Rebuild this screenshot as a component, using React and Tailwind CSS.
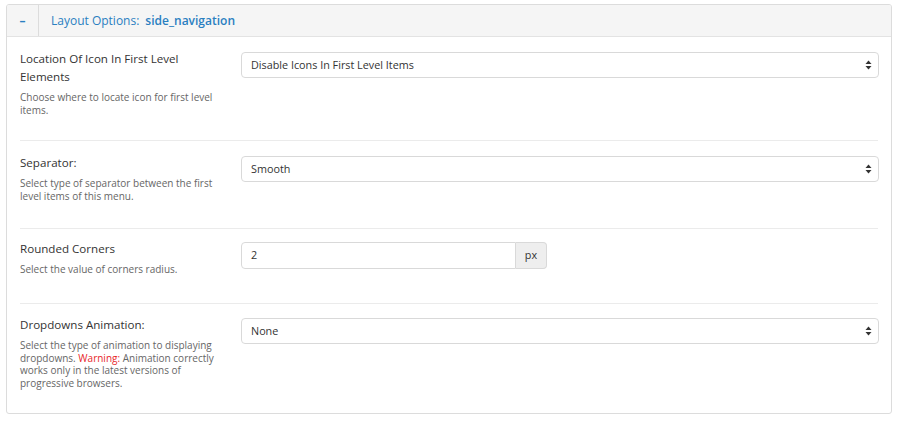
import React from "react";

const font = { fontFamily: '"Open Sans", "Liberation Sans", sans-serif' };

function Arrows() {
  return (
    <svg width="7" height="10" viewBox="0 0 7 10" className="shrink-0">
      <path d="M3.5 0.5 L6.5 4 L0.5 4 Z" fill="#333" />
      <path d="M3.5 9.5 L6.5 6 L0.5 6 Z" fill="#333" />
    </svg>
  );
}

function SelectBox({ value }) {
  return (
    <div className="flex items-center justify-between h-[26px] w-[638px] border border-[#d9d9d9] rounded-[4px] bg-white pl-[9px] pr-[6px] text-[10.8px] text-[#333]">
      <span>{value}</span>
      <Arrows />
    </div>
  );
}

function Row({ title, children, control, className }) {
  return (
    <div className={`flex border-b border-[#ebebeb] ${className}`}>
      <div className="w-[210px] shrink-0">
        <div className="text-[11.6px] leading-[18px] text-[#333] -mt-[2px]">{title}</div>
        <div className="text-[10px] leading-[12.5px] text-[#666] mt-[5px]">{children}</div>
      </div>
      <div className="ml-[11px]">{control}</div>
    </div>
  );
}

export default function App() {
  return (
    <div className="w-[900px] h-[421px] bg-white pt-[4px] px-[6px]" style={font}>
      <div className="w-[886px] h-[410px] border border-[#dcdcdc] rounded-[3px] overflow-hidden">
        <div className="flex h-[32px] bg-[#f5f5f5] border-b border-[#e3e3e3]">
          <div className="w-[32px] border-r border-[#dcdcdc] flex items-center justify-center text-[#2a7fc1] text-[12px] font-bold">
            –
          </div>
          <div className="flex items-center pl-[12px] text-[12px] text-[#2a7fc1]">
            <span>Layout Options:</span>
            <span className="ml-[6px] font-semibold">side_navigation</span>
          </div>
        </div>

        <div className="px-[13px]">
          <Row
            title="Location Of Icon In First Level Elements"
            className="h-[104px] pt-[15px]"
            control={<SelectBox value="Disable Icons In First Level Items" />}
          >
            Choose where to locate icon for first level items.
          </Row>
          <Row
            title="Separator:"
            className="h-[88px] pt-[15px]"
            control={<SelectBox value="Smooth" />}
          >
            Select type of separator between the first level items of this menu.
          </Row>
          <Row
            title="Rounded Corners"
            className="h-[75px] pt-[13px]"
            control={
              <div className="flex h-[27px]">
                <div className="w-[275px] border border-[#d9d9d9] rounded-l-[4px] bg-white flex items-center pl-[9px] text-[10.8px] text-[#333]">
                  2
                </div>
                <div className="w-[31px] border border-l-0 border-[#d9d9d9] rounded-r-[4px] bg-[#eeeeee] flex items-center justify-center text-[10.8px] text-[#333]">
                  px
                </div>
              </div>
            }
          >
            Select the value of corners radius.
          </Row>
          <Row
            title="Dropdowns Animation:"
            className="border-b-0 pt-[14px]"
            control={<SelectBox value="None" />}
          >
            Select the type of animation to displaying dropdowns.{" "}
            <span className="text-[#e8262a]">Warning:</span> Animation correctly works only in the
            latest versions of progressive browsers.
          </Row>
        </div>
      </div>
    </div>
  );
}
